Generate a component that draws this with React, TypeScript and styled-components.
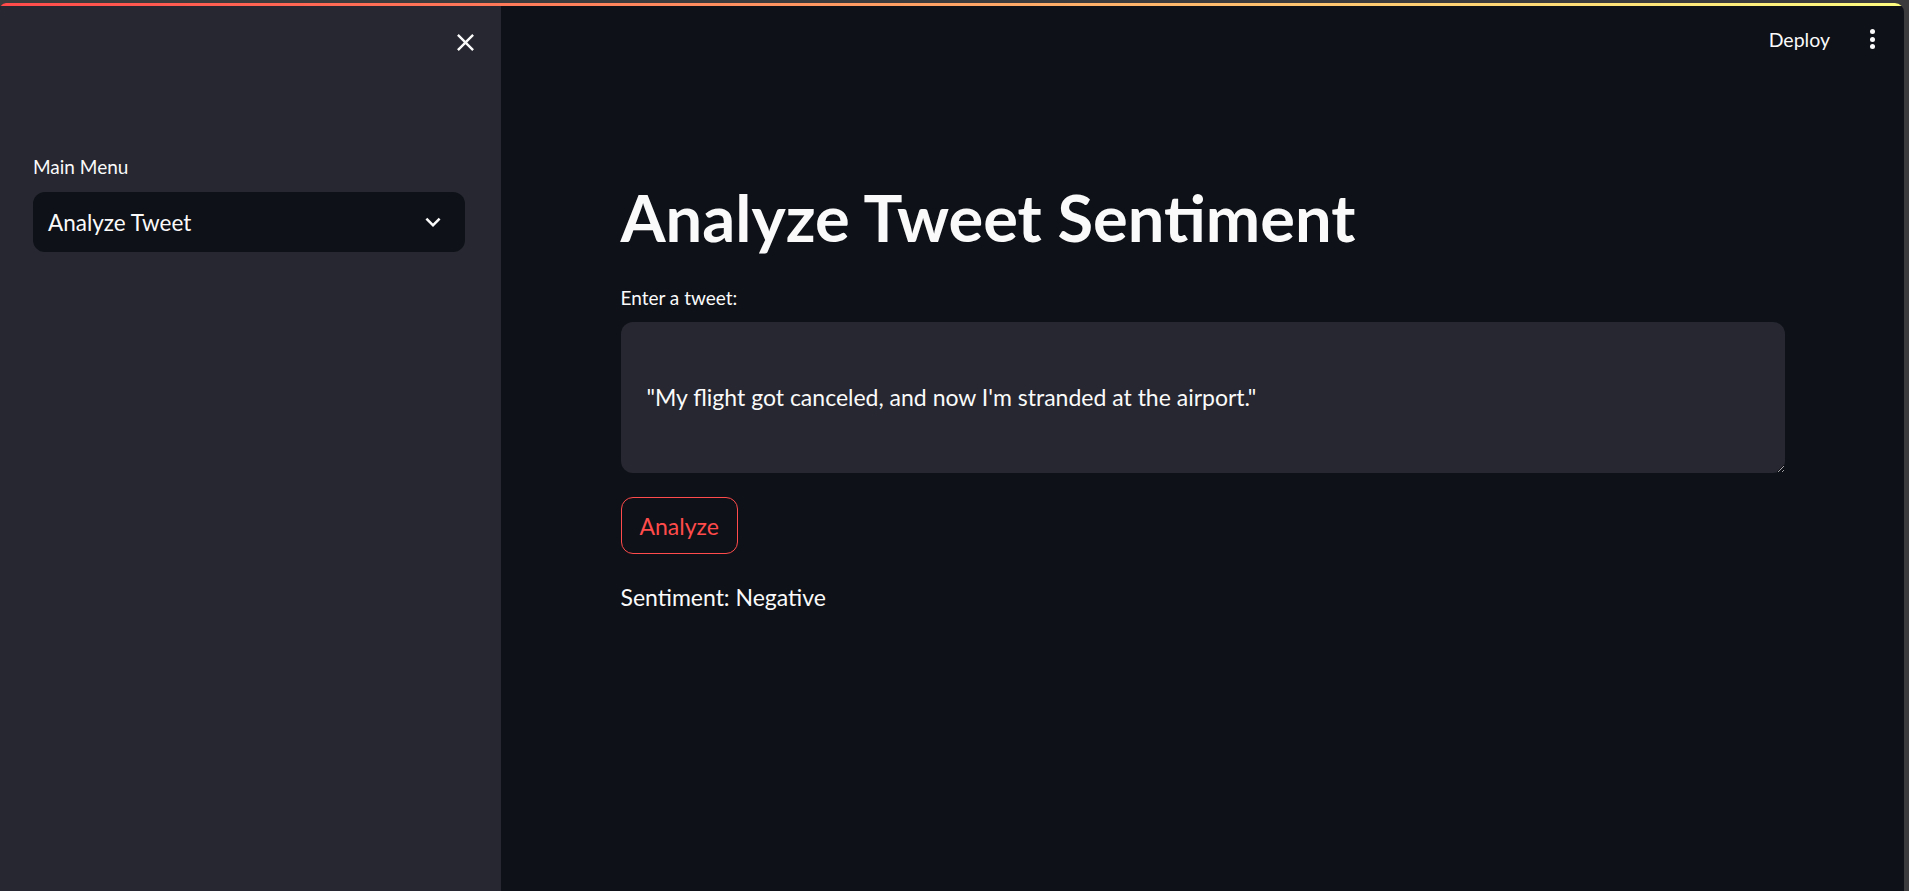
import styled, { createGlobalStyle } from "styled-components";

const GlobalStyle = createGlobalStyle`
  html, body {
    margin: 0;
    padding: 0;
    background: #3b3b3d;
    overflow: hidden;
  }
  * {
    box-sizing: border-box;
  }
`;

const FONT = `Lato, "Noto Sans", "Liberation Sans", sans-serif`;

const Frame = styled.div`
  width: 1909px;
  height: 891px;
  padding: 3px 5px 0 0;
  background: #3b3b3d;
`;

const Window = styled.div`
  height: 100%;
  display: flex;
  flex-direction: column;
  border-radius: 6px 9px 0 0;
  overflow: hidden;
  background: #0e1117;
  font-family: ${FONT};
  color: #fafafa;
`;

const Decoration = styled.div`
  height: 3px;
  flex: none;
  background: linear-gradient(90deg, rgb(255, 75, 75), rgb(255, 253, 128));
`;

const Body = styled.div`
  flex: 1;
  display: flex;
  min-height: 0;
`;

const Sidebar = styled.aside`
  width: 501px;
  flex: none;
  background: #262730;
  display: flex;
  flex-direction: column;
  padding: 0 36px 0 33px;
`;

const SidebarHeader = styled.div`
  height: 146px;
  display: flex;
  justify-content: flex-end;
  padding-top: 22px;
  margin-right: -15px;
`;

const IconButton = styled.button`
  width: 29px;
  height: 29px;
  padding: 0;
  border: none;
  background: transparent;
  color: #fafafa;
  display: flex;
  align-items: center;
  justify-content: center;
  cursor: pointer;

  svg {
    width: 29px;
    height: 29px;
    fill: currentColor;
  }
`;

const FieldLabel = styled.label`
  display: block;
  font-size: 19px;
  line-height: 30px;
  color: #fafafa;
`;

const SelectBox = styled.div`
  margin-top: 10px;
  height: 60px;
  border-radius: 12px;
  background: #0e1117;
  display: flex;
  align-items: center;
  justify-content: space-between;
  padding: 0 17px 0 15px;
  font-size: 22.5px;

  svg {
    width: 30px;
    height: 30px;
    fill: #fafafa;
  }
`;

const Main = styled.main`
  flex: 1;
  display: flex;
  flex-direction: column;
  min-width: 0;
`;

const Toolbar = styled.header`
  height: 66px;
  flex: none;
  display: flex;
  align-items: center;
  justify-content: flex-end;
  gap: 30px;
  padding-right: 20px;
`;

const ToolbarText = styled.span`
  font-size: 19.5px;
  color: #fafafa;
`;

const MenuDots = styled.div`
  width: 24px;
  display: flex;
  flex-direction: column;
  align-items: center;
  gap: 2.5px;

  span {
    width: 5px;
    height: 5px;
    border-radius: 50%;
    background: #fafafa;
  }
`;

const Content = styled.section`
  width: 1164px;
  margin: 0 auto;
  padding-top: 106px;
  display: flex;
  flex-direction: column;
  align-items: flex-start;
`;

const Title = styled.h1`
  margin: 0;
  font-size: 65px;
  font-weight: 700;
  line-height: 79px;
`;

const TweetLabel = styled(FieldLabel)`
  margin-top: 26px;
`;

const TweetInput = styled.textarea`
  margin-top: 9px;
  width: 100%;
  height: 151px;
  border: none;
  border-radius: 12px;
  background: #262730;
  color: #fafafa;
  color-scheme: dark;
  font-family: ${FONT};
  font-size: 23px;
  line-height: 36px;
  padding: 57px 20px 0 26px;
  resize: vertical;
  outline: none;
`;

const ActionButton = styled.button`
  margin-top: 24px;
  height: 57px;
  padding: 0 18px;
  border: 1px solid rgb(255, 75, 75);
  border-radius: 12px;
  background: transparent;
  color: rgb(255, 75, 75);
  font-family: ${FONT};
  font-size: 23px;
  cursor: pointer;
`;

const ResultText = styled.p`
  margin: 25px 0 0;
  font-size: 23px;
  line-height: 36px;
`;

const CloseIcon = () => (
  <svg viewBox="0 0 24 24">
    <path d="M19 6.41L17.59 5 12 10.590 6.41 5 5 6.41 10.59 12 5 17.59 6.41 19 12 13.41 17.59 19 19 17.59 13.41 12z" />
  </svg>
);

const ChevronIcon = () => (
  <svg viewBox="0 0 24 24">
    <path d="M16.59 8.59L12 13.17 7.41 8.59 6 10l6 6 6-6z" />
  </svg>
);

export default function App() {
  return (
    <Frame>
      <GlobalStyle />
      <Window>
        <Decoration />
        <Body>
          <Sidebar>
            <SidebarHeader>
              <IconButton aria-label="Close sidebar">
                <CloseIcon />
              </IconButton>
            </SidebarHeader>
            <FieldLabel>Main Menu</FieldLabel>
            <SelectBox>
              <span>Analyze Tweet</span>
              <ChevronIcon />
            </SelectBox>
          </Sidebar>
          <Main>
            <Toolbar>
              <ToolbarText>Deploy</ToolbarText>
              <MenuDots>
                <span />
                <span />
                <span />
              </MenuDots>
            </Toolbar>
            <Content>
              <Title>Analyze Tweet Sentiment</Title>
              <TweetLabel>Enter a tweet:</TweetLabel>
              <TweetInput
                defaultValue={`"My flight got canceled, and now I'm stranded at the airport."`}
              />
              <ActionButton>Analyze</ActionButton>
              <ResultText>Sentiment: Negative</ResultText>
            </Content>
          </Main>
        </Body>
      </Window>
    </Frame>
  );
}
